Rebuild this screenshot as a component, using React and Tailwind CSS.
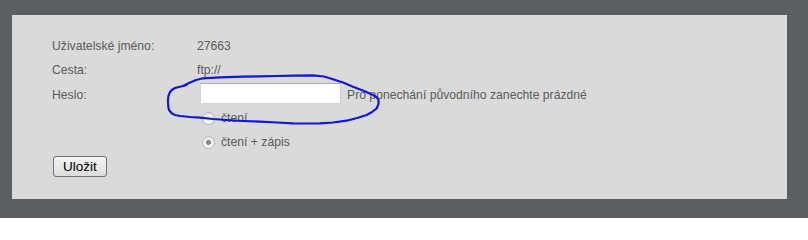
import React from "react";

const font = { fontFamily: '"Liberation Sans", Arial, sans-serif' };

// hand drawn blue loop around the password field
const loop =
  "183,86 189,83 196,80 203,78.3 220,77.3 243,76.7 260,76.3 277,76 295,75.6 313,75.3 324,76.5 333,79.3 343,82.5 353,86.7 364,91 373,95 377,97.5 378.5,100 378.5,104 376.7,108.3 372,112 366.7,115 357,118 346.7,120.7 333,122.5 320,123.3 307,123.5 293,123.3 277,122.5 260,121.7 243,121 227,120 213,119 200,117.7 190,117 180,116 175,115 171.7,113.3 169,110 168.3,106.7 168,101 168.3,96.7 169.5,93 171.7,90 175,88 180,86.7 186.7,85";

const Radio = ({ checked }) => (
  <span className="w-[13px] h-[13px] rounded-full border border-[#b4b4b4] bg-gradient-to-b from-[#e6e6e6] to-[#fafafa] flex items-center justify-center shrink-0">
    {checked && <span className="w-[5px] h-[5px] rounded-full bg-[#8a8a8a] border border-[#777]" />}
  </span>
);

const App = () => {
  return (
    <div className="relative w-[808px] h-[218px] overflow-hidden bg-[#5b5e63] pt-[15px] pl-[12px]" style={font}>
      <div className="w-[775px] h-[184px] bg-[#dadada] pl-[40px] pt-[19px] text-[12.2px] text-[#5a5a5a]">
        <div className="flex items-center h-[24px]">
          <span className="w-[145px]">Uživatelské jméno:</span>
          <span>27663</span>
        </div>
        <div className="flex items-center h-[25px]">
          <span className="w-[145px]">Cesta:</span>
          <span>ftp://</span>
        </div>
        <div className="flex items-center h-[24px]">
          <span className="w-[145px]">Heslo:</span>
          <input
            type="password"
            className="ml-[3px] -mt-[3px] w-[141px] h-[21px] bg-white border border-[#d4d4d4] border-t-[#a9a9a9] outline-none"
          />
          <span className="ml-[6px]">Pro ponechání původního zanechte prázdné</span>
        </div>
        <div className="flex items-center h-[23px] pl-[150px]">
          <Radio />
          <span className="ml-[6px]">čtení</span>
        </div>
        <div className="flex items-center h-[24px] pl-[150px]">
          <Radio checked />
          <span className="ml-[6px]">čtení + zápis</span>
        </div>
        <button className="mt-[2px] ml-[1px] w-[54px] h-[21px] rounded-[3px] border border-[#707070] bg-gradient-to-b from-[#f4f4f4] to-[#dcdcdc] text-[13.5px] font-normal text-black leading-none">
          Uložit
        </button>
      </div>
      <svg className="absolute inset-0 pointer-events-none" width="808" height="218">
        <polyline
          points={loop}
          fill="none"
          stroke="#1414dc"
          strokeWidth="2.2"
          strokeLinejoin="round"
          strokeLinecap="round"
        />
      </svg>
    </div>
  );
};

export default App;
